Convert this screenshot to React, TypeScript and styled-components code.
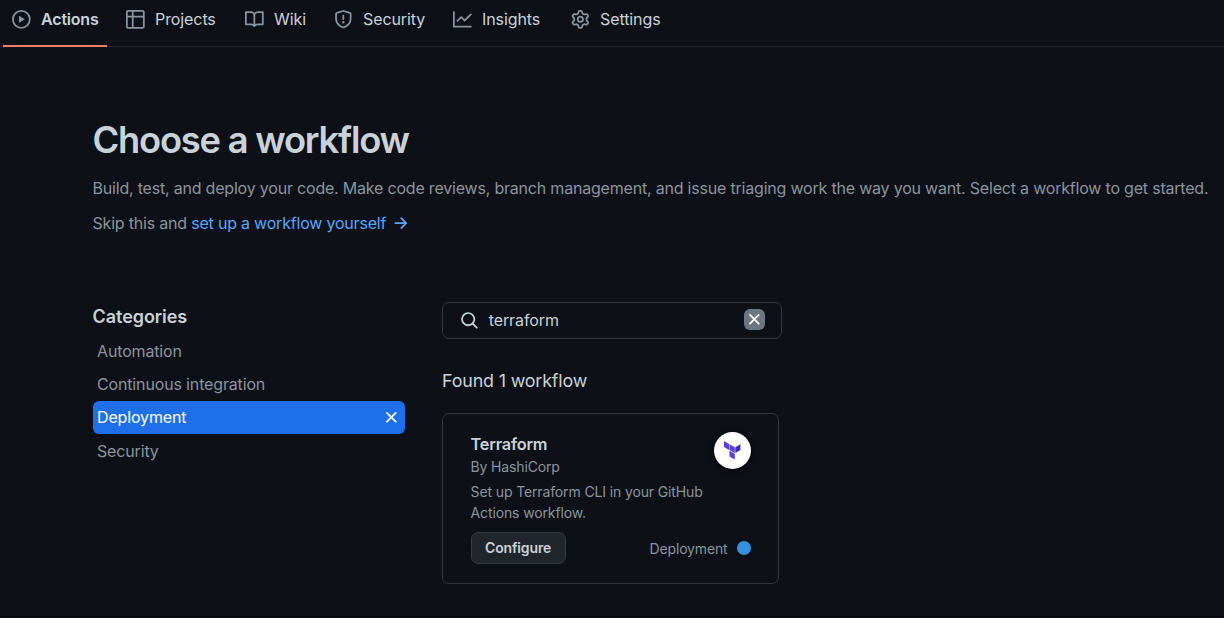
import React from "react";
import styled, { createGlobalStyle } from "styled-components";

const GlobalStyle = createGlobalStyle`
  * { box-sizing: border-box; }
  html, body { margin: 0; background: #0d1117; }
  body {
    font-family: Inter, "Liberation Sans", sans-serif;
    color: #c9d1d9;
    overflow: hidden;
  }
  h1, h2, h3, p, ul { margin: 0; padding: 0; }
`;

const icons = {
  play: "M8 0a8 8 0 1 1 0 16A8 8 0 0 1 8 0ZM1.5 8a6.5 6.5 0 1 0 13 0 6.5 6.5 0 0 0-13 0Zm4.879-2.773 4.264 2.559a.25.25 0 0 1 0 .428l-4.264 2.559A.25.25 0 0 1 6 10.559V5.442a.25.25 0 0 1 .379-.215Z",
  table:
    "M0 1.75C0 .784.784 0 1.75 0h12.5C15.216 0 16 .784 16 1.75v12.5A1.75 1.75 0 0 1 14.25 16H1.75A1.75 1.75 0 0 1 0 14.25ZM6.5 6.5v8h7.75a.25.25 0 0 0 .25-.25V6.5Zm8-1.5V1.75a.25.25 0 0 0-.25-.25H6.5V5Zm-13 1.5v7.75c0 .138.112.25.25.25H5v-8ZM5 5V1.5H1.75a.25.25 0 0 0-.25.25V5Z",
  book: "M0 1.75A.75.75 0 0 1 .75 1h4.253c1.227 0 2.317.59 3 1.501A3.743 3.743 0 0 1 11.006 1h4.245a.75.75 0 0 1 .75.75v10.5a.75.75 0 0 1-.75.75h-4.507a2.25 2.25 0 0 0-1.591.659l-.622.621a.75.75 0 0 1-1.06 0l-.622-.621A2.25 2.25 0 0 0 5.258 13H.75a.75.75 0 0 1-.75-.75Zm7.251 10.324.004-5.073-.002-2.253A2.25 2.25 0 0 0 5.003 2.5H1.5v9h3.757a3.75 3.75 0 0 1 1.994.574ZM8.755 4.75l-.004 7.322a3.752 3.752 0 0 1 1.992-.572H14.5v-9h-3.495a2.25 2.25 0 0 0-2.25 2.25Z",
  shield:
    "M7.467.133a1.748 1.748 0 0 1 1.066 0l5.25 1.68A1.75 1.75 0 0 1 15 3.48V7c0 1.566-.32 3.182-1.303 4.682-.983 1.498-2.585 2.813-5.032 3.855a1.697 1.697 0 0 1-1.33 0c-2.447-1.042-4.049-2.357-5.032-3.855C1.32 10.182 1 8.566 1 7V3.48a1.75 1.75 0 0 1 1.217-1.667Zm.61 1.429a.25.25 0 0 0-.153 0l-5.25 1.68a.25.25 0 0 0-.174.238V7c0 1.358.275 2.666 1.057 3.86.784 1.194 2.121 2.34 4.366 3.297a.196.196 0 0 0 .154 0c2.245-.956 3.582-2.104 4.366-3.298C13.225 9.666 13.5 8.36 13.5 7V3.48a.251.251 0 0 0-.174-.237l-5.25-1.68ZM8.75 4.75v3a.75.75 0 0 1-1.5 0v-3a.75.75 0 0 1 1.5 0ZM9 10.5a1 1 0 1 1-2 0 1 1 0 0 1 2 0Z",
  graph:
    "M1.5 1.75V13.5h13.75a.75.75 0 0 1 0 1.5H.75a.75.75 0 0 1-.75-.75V1.75a.75.75 0 0 1 1.5 0Zm14.28 2.53-5.25 5.25a.75.75 0 0 1-1.06 0L7 7.06 4.28 9.78a.751.751 0 0 1-1.042-.018.751.751 0 0 1-.018-1.042l3.25-3.25a.75.75 0 0 1 1.06 0L10 7.94l4.72-4.72a.751.751 0 0 1 1.042.018.751.751 0 0 1 .018 1.042Z",
  gear: "M8 0a8.2 8.2 0 0 1 .701.031C9.444.095 9.99.645 10.16 1.29l.288 1.107c.018.066.079.158.212.224.231.114.454.243.668.386.123.082.233.09.299.071l1.103-.303c.644-.176 1.392.021 1.82.63.27.385.506.792.704 1.218.315.675.111 1.422-.364 1.891l-.814.806c-.049.048-.098.147-.088.294.016.257.016.515 0 .772-.01.147.038.246.088.294l.814.806c.475.469.679 1.216.364 1.891a7.977 7.977 0 0 1-.704 1.217c-.428.61-1.176.807-1.82.63l-1.102-.302c-.067-.019-.177-.011-.3.071a5.909 5.909 0 0 1-.668.386c-.133.066-.194.158-.211.224l-.29 1.106c-.168.646-.715 1.196-1.458 1.26a8.006 8.006 0 0 1-1.402 0c-.743-.064-1.289-.614-1.458-1.26l-.289-1.106c-.018-.066-.079-.158-.212-.224a5.738 5.738 0 0 1-.668-.386c-.123-.082-.233-.09-.299-.071l-1.103.303c-.644.176-1.392-.021-1.82-.63a8.12 8.12 0 0 1-.704-1.218c-.315-.675-.111-1.422.363-1.891l.815-.806c.05-.048.098-.147.088-.294a6.214 6.214 0 0 1 0-.772c.01-.147-.038-.246-.088-.294l-.815-.806C.635 6.045.431 5.298.746 4.623a7.92 7.92 0 0 1 .704-1.217c.428-.61 1.176-.807 1.82-.63l1.102.302c.067.019.177.011.3-.071.214-.143.437-.272.668-.386.133-.066.194-.158.211-.224l.29-1.106C6.009.645 6.556.095 7.299.03 7.53.01 7.764 0 8 0Zm-.571 1.525c-.036.003-.108.036-.137.146l-.289 1.105c-.147.561-.549.967-.998 1.189-.173.086-.34.183-.5.29-.417.278-.97.423-1.529.27l-1.103-.303c-.109-.03-.175.016-.195.045-.22.312-.412.644-.573.99-.014.031-.021.11.059.19l.815.806c.411.406.562.957.53 1.456a4.709 4.709 0 0 0 0 .582c.032.499-.119 1.05-.53 1.456l-.815.806c-.081.08-.073.159-.059.19.162.346.353.677.573.989.02.03.085.076.195.046l1.102-.303c.56-.153 1.113-.008 1.53.27.161.107.328.204.501.29.447.222.85.629.997 1.189l.289 1.105c.029.109.101.143.137.146a6.6 6.6 0 0 0 1.142 0c.036-.003.108-.036.137-.146l.289-1.105c.147-.561.549-.967.998-1.189.173-.086.34-.183.5-.29.417-.278.97-.423 1.529-.27l1.103.303c.109.029.175-.016.195-.045.22-.313.411-.644.573-.99.014-.031.021-.11-.059-.19l-.815-.806c-.411-.406-.562-.957-.53-1.456a4.709 4.709 0 0 0 0-.582c-.032-.499.119-1.05.53-1.456l.815-.806c.081-.08.073-.159.059-.19a6.464 6.464 0 0 0-.573-.989c-.02-.03-.085-.076-.195-.046l-1.102.303c-.56.153-1.113.008-1.53-.27a4.44 4.44 0 0 0-.501-.29c-.447-.222-.85-.629-.997-1.189l-.289-1.105c-.029-.11-.101-.143-.137-.146a6.6 6.6 0 0 0-1.142 0ZM11 8a3 3 0 1 1-6 0 3 3 0 0 1 6 0ZM9.5 8a1.5 1.5 0 1 0-3.001.001A1.5 1.5 0 0 0 9.5 8Z",
  search:
    "M10.68 11.74a6 6 0 0 1-7.922-8.982 6 6 0 0 1 8.982 7.922l3.04 3.04a.749.749 0 0 1-.326 1.275.749.749 0 0 1-.734-.215ZM11.5 7a4.499 4.499 0 1 0-8.997 0A4.499 4.499 0 0 0 11.5 7Z",
  x: "M3.72 3.72a.75.75 0 0 1 1.06 0L8 6.94l3.22-3.22a.749.749 0 0 1 1.275.326.749.749 0 0 1-.215.734L9.06 8l3.22 3.22a.749.749 0 0 1-.326 1.275.749.749 0 0 1-.734-.215L8 9.06l-3.22 3.22a.751.751 0 0 1-1.042-.018.751.751 0 0 1-.018-1.042L6.94 8 3.72 4.78a.75.75 0 0 1 0-1.06Z",
  arrow:
    "M8.22 2.97a.75.75 0 0 1 1.06 0l4.25 4.25a.75.75 0 0 1 0 1.06l-4.25 4.25a.751.751 0 0 1-1.042-.018.751.751 0 0 1-.018-1.042l2.97-2.97H3.75a.75.75 0 0 1 0-1.5h7.44L8.22 4.03a.75.75 0 0 1 0-1.06Z",
};

type IconName = keyof typeof icons;

const Svg = styled.svg`
  display: block;
  flex: none;
  fill: currentColor;
`;

const Icon = ({ name, size = 18.7 }: { name: IconName; size?: number }) => (
  <Svg width={size} height={size} viewBox="0 0 16 16" aria-hidden="true">
    <path d={icons[name]} />
  </Svg>
);

const Page = styled.div`
  height: 617px;
  background: #0d1117;
  border-bottom: 1px solid #05060a;
`;

const Nav = styled.nav`
  display: flex;
  height: 47px;
  padding-left: 3.4px;
  border-bottom: 1px solid #21262d;
`;

const NavItem = styled.a<{ $width: number; $active?: boolean }>`
  display: flex;
  flex: none;
  align-items: center;
  width: ${(p) => p.$width}px;
  height: 47px;
  padding: 0 0 6px 8.6px;
  gap: 10.4px;
  color: #8b949e;
  border-bottom: 2px solid ${(p) => (p.$active ? "#f78166" : "transparent")};
`;

const NavLabel = styled.span<{ $bold?: boolean }>`
  color: #c9d1d9;
  font-size: 16px;
  line-height: 24px;
  margin-bottom: 1px;
  font-weight: ${(p) => (p.$bold ? 620 : 440)};
  letter-spacing: ${(p) => (p.$bold ? -0.2 : -0.1)}px;
  white-space: nowrap;
`;

const NavGap = styled.span`
  flex: none;
  width: 10px;
`;

const Main = styled.main`
  padding: 69px 0 0 92.5px;
`;

const Title = styled.h1`
  font-size: 36.3px;
  line-height: 48px;
  font-weight: 640;
  letter-spacing: -1.22px;
  white-space: nowrap;
`;

const Lead = styled.p<{ $top: number }>`
  display: flex;
  align-items: center;
  margin-top: ${(p) => p.$top}px;
  font-size: 16px;
  line-height: 24px;
  font-weight: 420;
  letter-spacing: -0.2px;
  color: #8b949e;
  white-space: pre;
`;

const Link = styled.a`
  display: inline-flex;
  align-items: center;
  gap: 5px;
  color: #58a6ff;
`;

const Columns = styled.div`
  display: flex;
  gap: 37px;
  margin-top: 67px;
`;

const Sidebar = styled.aside`
  flex: none;
  width: 312.5px;
`;

const SidebarTitle = styled.h2`
  padding-top: 2px;
  font-size: 18px;
  line-height: 26px;
  font-weight: 600;
  letter-spacing: -0.05px;
  margin-bottom: 4px;
`;

const Category = styled.a<{ $active?: boolean }>`
  display: flex;
  align-items: center;
  justify-content: space-between;
  height: 33.3px;
  padding: 0 4px 0 4.5px;
  border-radius: 6px;
  font-size: 16px;
  font-weight: ${(p) => (p.$active ? 440 : 410)};
  letter-spacing: -0.15px;
  color: ${(p) => (p.$active ? "#ffffff" : "#8b949e")};
  background: ${(p) => (p.$active ? "#1f6feb" : "transparent")};
`;

const Results = styled.section`
  width: 340px;
`;

const SearchBox = styled.div`
  display: flex;
  align-items: center;
  height: 37px;
  padding: 0 16px 0 17px;
  border: 1px solid #30363d;
  border-radius: 7px;
  font-size: 16px;
  letter-spacing: -0.1px;
`;

const Query = styled.span`
  flex: 1;
  margin: 0 0 1px 10px;
`;

const ClearButton = styled.span`
  display: flex;
  align-items: center;
  justify-content: center;
  width: 21px;
  height: 21px;
  margin-bottom: 2px;
  border-radius: 6px;
  color: #ffffff;
  background: #6e7681;
`;

const ResultCount = styled.h3`
  margin-top: 29px;
  font-size: 17.9px;
  line-height: 26px;
  font-weight: 420;
  letter-spacing: -0.17px;
`;

const Card = styled.article`
  width: 337px;
  height: 171px;
  margin-top: 19px;
  padding: 18px 27.5px 0 27.6px;
  border: 1px solid #30363d;
  border-radius: 7px;
  color: #8b949e;
`;

const CardHeader = styled.header`
  display: flex;
  justify-content: space-between;
`;

const CardTitle = styled.h3`
  font-size: 16.3px;
  line-height: 24px;
  font-weight: 600;
  letter-spacing: -0.2px;
  color: #c9d1d9;
`;

const Author = styled.p`
  font-size: 14px;
  line-height: 21px;
  letter-spacing: -0.15px;
`;

const Avatar = styled.div`
  display: flex;
  align-items: center;
  justify-content: center;
  width: 37px;
  height: 37px;
  padding-bottom: 1px;
  border-radius: 50%;
  background: #ffffff;
  box-shadow: 0 2px 6px #010409;
`;

const Description = styled.p`
  margin-top: 4px;
  font-size: 14px;
  line-height: 21px;
  letter-spacing: -0.13px;
  white-space: nowrap;
`;

const CardFooter = styled.footer`
  display: flex;
  align-items: center;
  justify-content: space-between;
  margin-top: 9px;
`;

const ConfigureButton = styled.button`
  width: 95px;
  height: 32px;
  padding: 0;
  border: 1px solid #363b42;
  border-radius: 7px;
  font: 600 14px/20px Inter, "Liberation Sans", sans-serif;
  letter-spacing: -0.15px;
  color: #c9d1d9;
  background: #21262d;
`;

const Tag = styled.span`
  display: flex;
  align-items: center;
  gap: 9px;
  font-size: 14px;
  letter-spacing: -0.15px;
`;

const Dot = styled.span`
  width: 14px;
  height: 14px;
  border-radius: 50%;
  background: #3692e1;
`;

const TerraformLogo = () => (
  <Svg width="17" height="19" viewBox="0 0 17 19" aria-label="Terraform">
    <path d="M0 0 5.1 3v5.9L0 6z" fill="#5c3ddb" />
    <path d="M5.5 3.2 10.8 6.2v5.9L5.5 9.1z" fill="#5c3ddb" />
    <path d="M11.3 6.2 16.4 3.3v5.8l-5.1 3z" fill="#4028b0" />
    <path d="M5.5 9.7l5.3 3v5.9l-5.3-3z" fill="#5c3ddb" />
  </Svg>
);

const navItems: { icon: IconName; label: string; width: number }[] = [
  { icon: "table", label: "Projects", width: 119 },
  { icon: "book", label: "Wiki", width: 89 },
  { icon: "shield", label: "Security", width: 119 },
  { icon: "graph", label: "Insights", width: 118 },
  { icon: "gear", label: "Settings", width: 110 },
];

export default function App() {
  return (
    <Page>
      <GlobalStyle />
      <Nav>
        <NavItem $width={104} $active>
          <Icon name="play" />
          <NavLabel $bold>Actions</NavLabel>
        </NavItem>
        <NavGap />
        {navItems.map((item) => (
          <NavItem key={item.label} $width={item.width}>
            <Icon name={item.icon} />
            <NavLabel>{item.label}</NavLabel>
          </NavItem>
        ))}
      </Nav>
      <Main>
        <Title>Choose a workflow</Title>
        <Lead $top={12}>
          Build, test, and deploy your code. Make code reviews, branch management, and issue triaging work the way you want. Select a workflow to get started.
        </Lead>
        <Lead $top={11}>
          {"Skip this and "}
          <Link>
            set up a workflow yourself
            <Icon name="arrow" />
          </Link>
        </Lead>
        <Columns>
          <Sidebar>
            <SidebarTitle>Categories</SidebarTitle>
            <Category>Automation</Category>
            <Category>Continuous integration</Category>
            <Category $active>
              Deployment
              <Icon name="x" />
            </Category>
            <Category>Security</Category>
          </Sidebar>
          <Results>
            <SearchBox>
              <Icon name="search" />
              <Query>terraform</Query>
              <ClearButton>
                <Icon name="x" />
              </ClearButton>
            </SearchBox>
            <ResultCount>Found 1 workflow</ResultCount>
            <Card>
              <CardHeader>
                <div>
                  <CardTitle>Terraform</CardTitle>
                  <Author>By HashiCorp</Author>
                </div>
                <Avatar>
                  <TerraformLogo />
                </Avatar>
              </CardHeader>
              <Description>
                Set up Terraform CLI in your GitHub
                <br />
                Actions workflow.
              </Description>
              <CardFooter>
                <ConfigureButton>Configure</ConfigureButton>
                <Tag>
                  Deployment
                  <Dot />
                </Tag>
              </CardFooter>
            </Card>
          </Results>
        </Columns>
      </Main>
    </Page>
  );
}
